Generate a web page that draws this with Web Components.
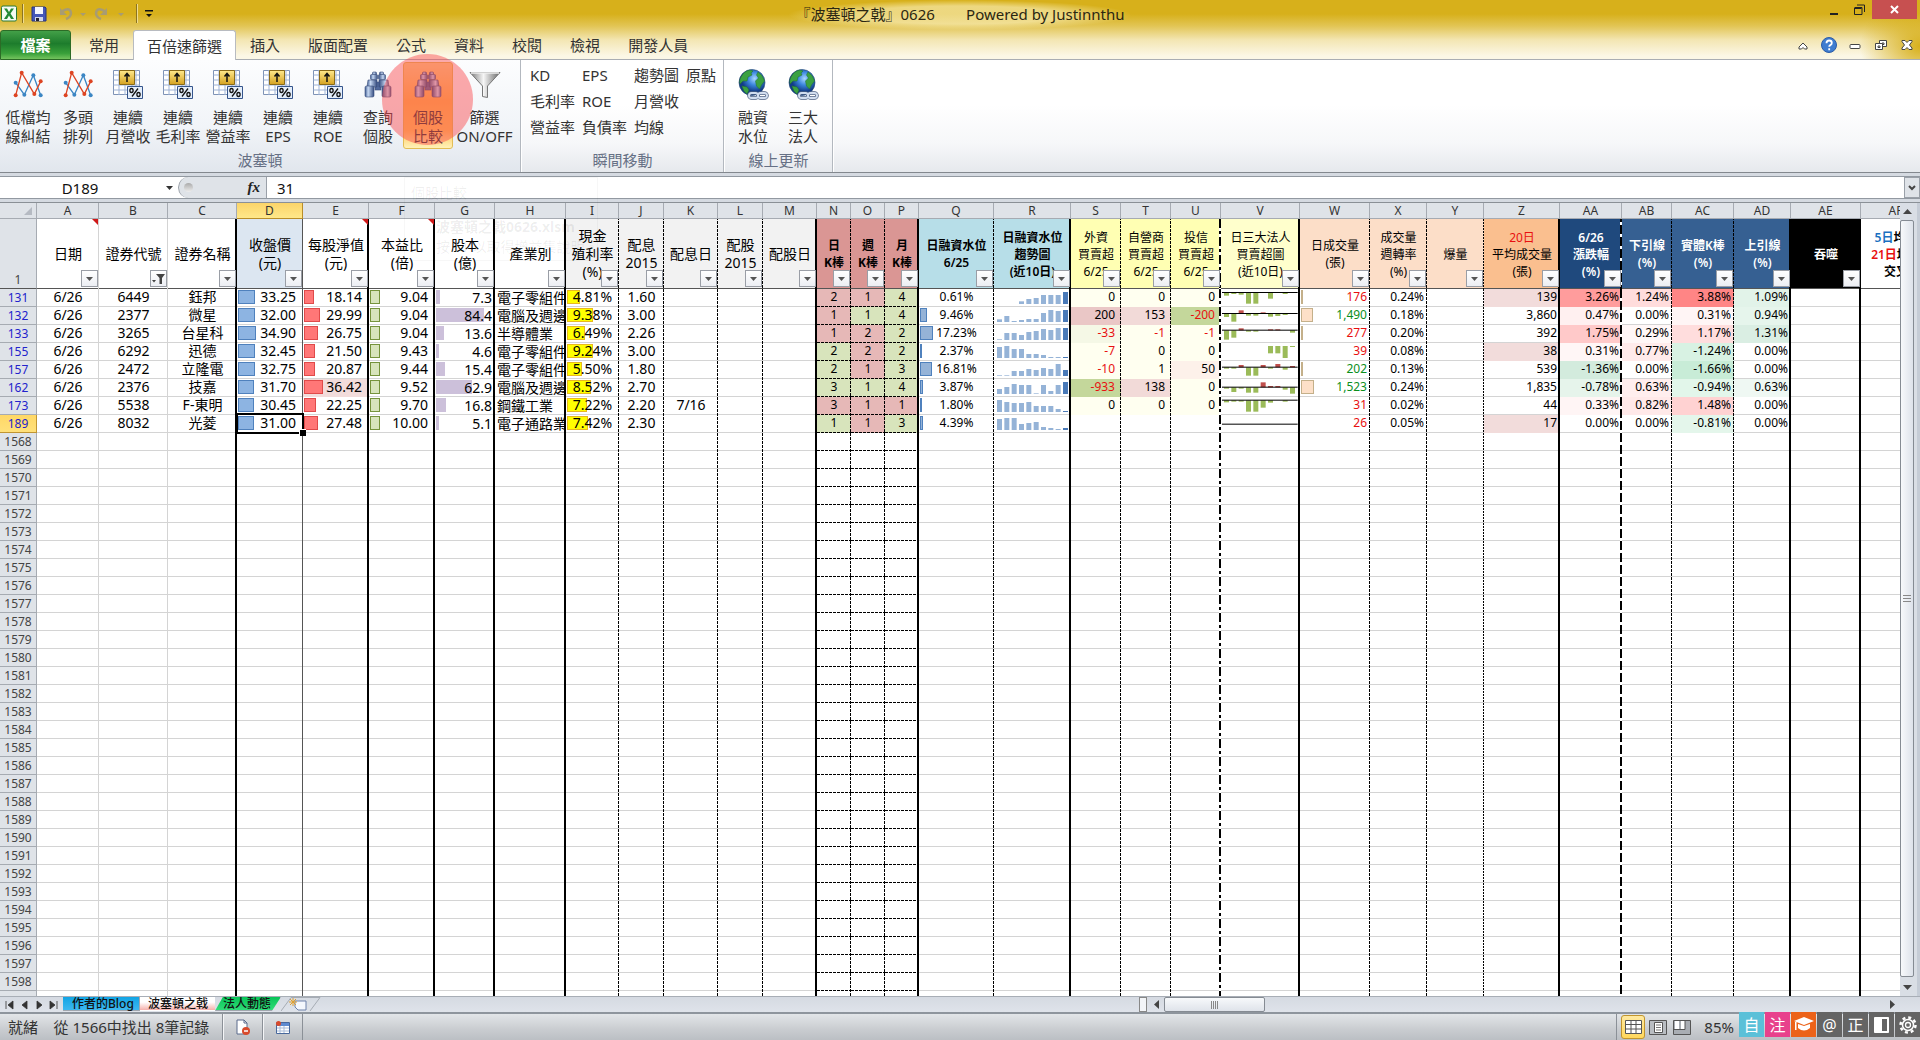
<!DOCTYPE html>
<html lang="zh-Hant">
<head>
<meta charset="utf-8">
<title>『波塞頓之戟』0626</title>
<style>
  body {
    margin: 0;
    font-family: "Noto Sans", "Noto Sans CJK TC", sans-serif;
    font-size: 15px;
    color: #333;
  }
</style>
</head>
<body>
<excel-window></excel-window>

<script>
const ICONS = {
  lines: `<svg width="32" height="32" viewBox="0 0 96 96" fill="none" stroke-width="4">
    <path d="M11 44 L37 80 L64 22 L86 82" stroke="#3b86c4"/><path d="M11 82 L29 14 L67 78 L86 40" stroke="#dd4422"/>
    <g fill="#3b86c4"><circle cx="11" cy="44" r="6"/><circle cx="37" cy="80" r="6"/><circle cx="64" cy="22" r="6"/><circle cx="86" cy="82" r="6"/></g>
    <g fill="#dd4422"><circle cx="11" cy="82" r="6"/><circle cx="29" cy="14" r="6"/><circle cx="67" cy="78" r="6"/><circle cx="86" cy="40" r="6"/></g></svg>`,
  percent: `<svg width="32" height="32" viewBox="0 0 32 32"><defs><linearGradient id="g" x2="0" y2="1"><stop stop-color="#ffe98c"/><stop offset="1" stop-color="#d5a220"/></linearGradient></defs>
    <path d="M1.500 2.500h26v24h-26z" fill="#fff" stroke="#7e93b6"/><path d="M1.500 7h26M1.500 12h26M1.500 17h26M1.500 22h26M7 2v25M13 2v25M20 2v25M24 2v25" stroke="#9fb4d6"/>
    <path d="M7.500 2.500h15v14h-15z" fill="url(#g)" stroke="#8a6a18"/><path d="M15 14V6M12.500 8.500L15 5.500l2.500 3" fill="none" stroke="#111" stroke-width="1.500"/>
    <path d="M15.500 18.500h15v12h-15z" fill="#e4eefb" stroke="#35558c"/><g fill="none" stroke="#111" stroke-width="1.300"><ellipse cx="19.500" cy="22.500" rx="1.600" ry="2"/><ellipse cx="26.500" cy="26.500" rx="1.600" ry="2"/><path d="M26 20.500l-6 8"/></g></svg>`,
  binoculars: `<svg width="32" height="32" viewBox="0 0 32 32"><defs><linearGradient id="b"><stop stop-color="#3d598e"/><stop offset=".35" stop-color="#c7d9f3"/><stop offset="1" stop-color="#344c80"/></linearGradient></defs>
    <g stroke="#3a4f7c" stroke-width=".6"><rect x="13" y="14" width="6" height="8" fill="#50699c"/>
    <g id="half" fill="url(#b)"><rect x="10.500" y="4" width="4" height="3" rx="1"/><rect x="8.500" y="6.500" width="7" height="5" rx="1"/><path d="M6 12h9v7H5z"/><rect x="3" y="18" width="9" height="11" rx="1.500"/></g>
    <use href="#half" x="0" transform="translate(32 0) scale(-1 1)"/></g></svg>`,
  funnel: `<svg width="32" height="32" viewBox="0 0 32 32"><defs><linearGradient id="f"><stop stop-color="#777"/><stop offset=".45" stop-color="#f6f6f6"/><stop offset="1" stop-color="#666"/></linearGradient></defs>
    <path d="M1 4.500h30L18.500 18v11.500l-5-1V18z" fill="url(#f)" stroke="#777"/><path d="M2 5h28" stroke="#eee" stroke-width="1.500"/></svg>`,
  globe: `<svg width="32" height="32" viewBox="0 0 32 32"><defs><radialGradient id="o" cx=".6" cy=".35"><stop stop-color="#a9d8ff"/><stop offset=".5" stop-color="#3b86dd"/><stop offset="1" stop-color="#123c86"/></radialGradient></defs>
    <circle cx="15" cy="14.500" r="13" fill="url(#o)" stroke="#1d4172" stroke-width=".6"/>
    <path d="M4 9q3-6 9-7l3 1-2 2 1 2-4 2-1 4-4 0-3 3q-1-4 1-7zM5 18l5 1 2 3-2 4q-4-3-5-8zM21 4q5 3 6.500 9l-3 4-2 4-3-3-1-5 3-3-2-3z" fill="#3ba142" stroke="#23702a" stroke-width=".5"/>
    <g fill="none" stroke-width="3.500" stroke="#4b5f83"><rect x="12" y="25" width="9" height="5" rx="2.500"/><rect x="21" y="25" width="9" height="5" rx="2.500"/></g>
    <g fill="none" stroke-width="2" stroke="#d2def0"><rect x="12" y="25" width="9" height="5" rx="2.500"/><rect x="21" y="25" width="9" height="5" rx="2.500"/></g></svg>`,
};

const RESET = `
  :host, * { box-sizing: border-box; }
  button { font: inherit; color: inherit; background: none; border: 0; padding: 0; margin: 0; }
  input { font: inherit; color: #111; border: 0; padding: 0; margin: 0; background: none; outline: 0; min-width: 0; }
  svg { display: block; }
`;

class BaseElement extends HTMLElement {
  constructor() {
    super();
    this.attachShadow({ mode: 'open' });
  }

  connectedCallback() {
    this.shadowRoot.innerHTML = `<style>${RESET}${this.styles()}</style>${this.render()}`;
  }
}

class TitleBar extends BaseElement {
  styles() {
    return `
      :host { display: grid; grid-template-columns: 1fr auto 1fr; height: 30px; color: #2b2611; }
      .quick { display: flex; align-items: center; height: 27px; }
      .quick > * { flex: none; }
      .sep { width: 1px; height: 19px; background: #8c7420; box-shadow: 1px 0 #efdc90; margin: 0 8px 0 4px; }
      .name { white-space: pre; line-height: 29px; background: radial-gradient(closest-side, rgba(255,248,210,.55) 60%, transparent); padding: 0 8px; }
      .win { display: flex; justify-content: flex-end; align-items: flex-start; padding-right: 3px; }
      .win button { width: 25px; height: 19px; display: grid; place-items: center; }
      .win .close { width: 45px; background: #c75050; }`;
  }

  render() {
    return `
      <div class="quick">
        <svg width="18" height="18" viewBox="0 0 18 18"><rect x="1.500" y="1" width="15" height="15" rx="1.500" fill="#f5fbf2" stroke="#2c7a35"/><path d="M4 3.500h3l2 3.500 2-3.500h3L10.500 8.500l3.500 5.500h-3L9 10.500 7 14H4l3.500-5.500z" fill="#258a35"/></svg>
        <span class="sep"></span>
        <svg width="16" height="16" viewBox="0 0 16 16"><path d="M1 1h13l1 1v13H1z" fill="#4457b8" stroke="#27357f"/><path d="M4 1h8v7H4z" fill="#f3f6ff"/><path d="M4 11h8v4H4z" fill="#cfd5ea"/><path d="M5 12h3v3H5z" fill="#223"/></svg>
        <svg width="74" height="16" viewBox="0 0 74 16" style="margin-left:11px"><g fill="none" stroke="#a89c72" stroke-width="2.500"><path d="M3 6q9-6 10 1 0 4-5 6"/><path d="M48 6q-9-6-10 1 0 4 5 6"/></g><path d="M2 2v7h7zM49 2v7h-7zM22 7h6l-3 3zM60 7h6l-3 3z" fill="#a89c72"/></svg>
        <span class="sep"></span>
        <svg width="8" height="8" viewBox="0 0 8 8"><path d="M0 0h8v1.500H0zM1 4h6L4 7z" fill="#111"/></svg>
      </div>
      <div class="name">『波塞頓之戟』0626        Powered by Justinnthu</div>
      <div class="win">
        <button aria-label="最小化"><svg width="9" height="12"><path d="M0 10h8" stroke="#222" stroke-width="2"/></svg></button>
        <button aria-label="還原"><svg width="11" height="11" fill="none" stroke="#222"><path d="M1 3.500h7v7H.500v-7M.500 4.500h7M3 1h7.500v7"/></svg></button>
        <button class="close" aria-label="關閉"><svg width="9" height="9"><path d="M1 1l7 7M8 1L1 8" stroke="#fff" stroke-width="2"/></svg></button>
      </div>`;
  }
}
customElements.define('title-bar', TitleBar);

class RibbonTabs extends BaseElement {
  styles() {
    return `
      :host { display: flex; height: 30px; border-bottom: 1px solid #a9adb3; }
      nav { display: flex; flex: 1; height: 30px; }
      button { padding: 0 14px; line-height: 28px; white-space: nowrap; }
      .file { width: 71px; margin-right: 4px; color: #fff; font-weight: bold; line-height: 26px; border: 1px solid #2c6b26; border-radius: 3px 3px 0 0; background: linear-gradient(#43a048, #1d7c2c 45%, #39a03a 80%, #74c35e); }
      .active { background: #fff; border: 1px solid #b8bbc0; border-bottom: 0; padding: 0 13px; border-radius: 3px 3px 0 0; }
      .tools { display: flex; align-items: center; gap: 10px; padding-right: 5px; }
      .tools svg { width: 16px; height: 16px; }`;
  }

  render() {
    const tabs = ['常用', '百倍速篩選', '插入', '版面配置', '公式', '資料', '校閱', '檢視', '開發人員'];
    return `
      <nav><button class="file">檔案</button>${tabs.map((t, i) => `<button class="${i === 1 ? 'active' : ''}">${t}</button>`).join('')}</nav>
      <div class="tools">
        <svg viewBox="0 0 16 16"><path d="M4 10l4-4 4 4v2H9.500L8 10.500 6.500 12H4z" fill="#fff" stroke="#444"/></svg>
        <svg viewBox="0 0 16 16"><circle cx="8" cy="8" r="7.500" fill="#3f7dd0" stroke="#2b5ca8"/><path d="M5.500 6.200q0-2.700 2.700-2.700 2.600 0 2.600 2.400 0 1.400-1.500 2.200-1.100.6-1.100 1.700M8.200 11.200v2" fill="none" stroke="#fff" stroke-width="1.800"/></svg>
        <svg viewBox="0 0 16 16"><rect x="3" y="7.500" width="10" height="4" rx="1" fill="#fff" stroke="#444"/></svg>
        <svg viewBox="0 0 16 16" fill="#fff" stroke="#444"><path d="M6.500 3.500h7v6h-7zM9 6h2v1.500H9z"/><path d="M2.500 6.500h7v6h-7zM5 9h2v1.500H5z"/></svg>
        <svg viewBox="0 0 16 16"><path d="M3 3.500h3l2 2 2-2h3v1L10.500 8l2.500 3v1.500h-3l-2-2-2 2H3V11l2.500-3L3 4.500z" fill="#fff" stroke="#444"/></svg>
      </div>`;
  }
}
customElements.define('ribbon-tabs', RibbonTabs);

class RibbonButton extends BaseElement {
  styles() {
    return `
      :host { display: block; width: 50px; height: 87px; }
      :host([wide]) { width: 63px; }
      button { width: 100%; height: 100%; display: flex; flex-direction: column; align-items: center; gap: 8px; padding-top: 6px; line-height: 19px; white-space: nowrap; }
      :host([hot]) button { border: 1px solid #e3bd55; border-radius: 3px; padding-top: 5px; background: linear-gradient(#fbd58a, #ffb94e 45%, #ffc65c 80%, #fff2b8); }`;
  }

  render() {
    return `<button>${ICONS[this.getAttribute('icon')]}<span><slot></slot></span></button>`;
  }
}
customElements.define('ribbon-button', RibbonButton);

class RibbonGroup extends BaseElement {
  styles() {
    return `
      :host { display: flex; flex-direction: column; border-right: 1px solid #b3b8bf; box-shadow: 1px 0 #fff; margin-right: 1px; }
      .items { display: flex; height: 89px; padding: 2px 4px 0 3px; }
      .label { text-align: center; line-height: 22px; color: #667085; }`;
  }

  render() {
    return `<div class="items"><slot></slot></div><div class="label">${this.getAttribute('label')}</div>`;
  }
}
customElements.define('ribbon-group', RibbonGroup);

class JumpList extends BaseElement {
  styles() {
    return `
      :host { display: grid; grid-template-columns: repeat(4, auto); grid-auto-rows: 26px; column-gap: 7px; padding: 0 3px 0 5px; }
      button { text-align: left; min-width: 30px; white-space: nowrap; line-height: 26px; }`;
  }

  render() {
    const rows = ['KD', 'EPS', '趨勢圖', '原點', '毛利率', 'ROE', '月營收', '', '營益率', '負債率', '均線'];
    return rows.map((r) => (r ? `<button>${r}</button>` : '<span></span>')).join('');
  }
}
customElements.define('jump-list', JumpList);

class RibbonPanel extends BaseElement {
  styles() {
    return `
      :host { display: flex; flex: none; position: relative; height: 113px; background: linear-gradient(#fff 40%, #f6f7f9 75%, #e6e9ed); border-bottom: 1px solid #83888e; }
      .first { background: linear-gradient(#fcfdfe, #f1f4f8 60%, #e1e6ed); }
      /* click marker, sits over the compare button */
      .click { position: absolute; left: 382px; top: -6px; width: 91px; height: 91px; border-radius: 50%; background: rgba(250, 70, 75, .46); pointer-events: none; z-index: 2; }
      .tip { position: absolute; left: 404px; top: 117px; width: 194px; height: 84px; z-index: 3; border: 1px solid rgba(0,0,0,.03); color: rgba(0,0,0,.07); font-size: 14px; padding: 5px 6px; pointer-events: none; white-space: nowrap; }
      .tip div { line-height: 20px; }
      .tip b { display: block; line-height: 20px; margin: 14px 0 0 25px; }
      .tip p { margin: 0 0 0 25px; line-height: 20px; }`;
  }

  render() {
    const growth = ['月營收', '毛利率', '營益率', 'EPS', 'ROE'];
    return `
      <ribbon-group label="波塞頓" class="first">
        <ribbon-button icon="lines">低檔均<br>線糾結</ribbon-button>
        <ribbon-button icon="lines">多頭<br>排列</ribbon-button>
        ${growth.map((g) => `<ribbon-button icon="percent">連續<br>${g}</ribbon-button>`).join('')}
        <ribbon-button icon="binoculars">查詢<br>個股</ribbon-button>
        <ribbon-button icon="binoculars" hot>個股<br>比較</ribbon-button>
        <ribbon-button icon="funnel" wide>篩選<br>ON/OFF</ribbon-button>
      </ribbon-group>
      <ribbon-group label="瞬間移動"><jump-list></jump-list></ribbon-group>
      <ribbon-group label="線上更新">
        <ribbon-button icon="globe">融資<br>水位</ribbon-button>
        <ribbon-button icon="globe">三大<br>法人</ribbon-button>
      </ribbon-group>
      <div class="click"></div>
      <div class="tip"><div>個股比較</div><b>波塞頓之戟0626.xlsm</b><p>按 F1 以取得增益集說明。</p></div>`;
  }
}
customElements.define('ribbon-panel', RibbonPanel);

class FormulaBar extends BaseElement {
  styles() {
    return `
      :host { display: flex; flex: none; height: 30px; padding: 3px 0 3px; background: #d5dae1; border-bottom: 1px solid #8a9096; }
      .row { display: flex; flex: 1; border: 1px solid #9299a1; border-width: 1px 0; background: #fff; }
      .name { width: 160px; text-align: center; }
      .drop { width: 18px; display: grid; place-items: center; }
      .fx { width: 89px; display: flex; align-items: center; justify-content: space-between; padding: 0 6px 0 5px; background: #dfe3e8; border: 1px solid #9aa0a8; border-width: 0 1px; border-radius: 12px 0 0 12px; }
      .dot { width: 9px; height: 9px; border-radius: 50%; background: linear-gradient(#aaa, #eee); }
      .fx i { font: italic bold 15px "Liberation Serif", serif; color: #222; }
      .value { flex: 1; padding-left: 10px; }
      .more { width: 16px; background: #dfe3e8; border: 1px solid #9aa0a8; display: grid; place-items: center; }`;
  }

  render() {
    return `
      <div class="row">
        <input class="name" value="D189" aria-label="名稱方塊">
        <button class="drop" aria-label="名稱清單"><svg width="7" height="4"><path d="M0 0h7L3.500 4z" fill="#333"/></svg></button>
        <div class="fx"><span class="dot"></span><i>fx</i></div>
        <input class="value" value="31" aria-label="資料編輯列">
        <button class="more" aria-label="展開"><svg width="8" height="6"><path d="M1 1l3 3 3-3" fill="none" stroke="#444" stroke-width="2"/></svg></button>
      </div>`;
  }
}
customElements.define('formula-bar', FormulaBar);

// letter, width, right edge, header fill, header text, extra header class
const COLS = [
  ['A', 62, '', '', '日期', 'note'],
  ['B', 69, '', '', '證券代號', 'filtered'],
  ['C', 69, 'thick', '', '證券名稱', ''],
  ['D', 66, 'freeze', '#dce6f1', '收盤價<br>(元)', ''],
  ['E', 66, 'thick', '', '每股淨值<br>(元)', 'note'],
  ['F', 66, 'thick', '', '本益比<br>(倍)', 'note'],
  ['G', 60, 'thick', '', '股本<br>(億)', ''],
  ['H', 71, 'thick', '', '產業別', ''],
  ['I', 53, 'dash', '#f2f2f2', '現金<br>殖利率<br>(%)', ''],
  ['J', 45, 'dash', '#f2f2f2', '配息<br>2015', ''],
  ['K', 54, 'dash', '#f2f2f2', '配息日', ''],
  ['L', 45, 'dash', '#f2f2f2', '配股<br>2015', ''],
  ['M', 54, 'thick', '#f2f2f2', '配股日', ''],
  ['N', 34, 'dash', '#da9694', '日<br>K棒', 'small bold'],
  ['O', 34, 'dash', '#da9694', '週<br>K棒', 'small bold'],
  ['P', 34, 'thick', '#da9694', '月<br>K棒', 'small bold'],
  ['Q', 75, 'dash', '#b7dee8', '日融資水位<br>6/25', 'small semi'],
  ['R', 77, 'thick', '#b7dee8', '日融資水位<br>趨勢圖<br>(近10日)', 'small semi'],
  ['S', 50, 'dash', '#ffffb3', '外資<br>買賣超<br>6/25', 'small'],
  ['T', 50, 'dash', '#ffffb3', '自營商<br>買賣超<br>6/25', 'small'],
  ['U', 50, 'dashdot', '#ffffb3', '投信<br>買賣超<br>6/25', 'small'],
  ['V', 79, 'thick', '#ffffcc', '日三大法人<br>買賣超圖<br>(近10日)', 'small'],
  ['W', 70, 'dash', '#fcdec8', '日成交量<br>(張)', 'small'],
  ['X', 57, 'dash', '#fcdec8', '成交量<br>週轉率<br>(%)', 'small'],
  ['Y', 57, 'dot', '#fcdec8', '爆量', 'small'],
  ['Z', 76, 'thick', '#fabf8f', '<em class="red">20日</em><br>平均成交量<br>(張)', 'small'],
  ['AA', 62, 'mdash', '#1f497d', '6/26<br>漲跌幅<br>(%)', 'small semi light'],
  ['AB', 50, 'dash', '#366092', '下引線<br>(%)', 'small semi light'],
  ['AC', 62, 'dash', '#366092', '實體K棒<br>(%)', 'small semi light'],
  ['AD', 57, 'thick', '#366092', '上引線<br>(%)', 'small semi light'],
  ['AE', 70, 'thick', '#000', '吞噬', 'small semi light'],
  ['AF', 70, '', '', '<em class="blue">5日</em>均線<br><em class="red">21日</em>均線<br>交叉', 'small semi nobutton'],
];

const R = '#e6b8b7', G = '#d8e4bc', Y = '#fffff0';
// [text, bar width, fill, colour]
const ROWS = [
  { n: 131, a: ['6449', '鈺邦'], d: ['33.25', 17], e: ['18.14', 10], f: '9.04', g: ['7.3', 4], h: '電子零組件', i: ['4.81%', 13], j: '1.60',
    k: [[2, R], [1, R], [4, G]], q: ['0.61%', 0], r: [0, 0, 0, 8, 15, 18, 27, 27, 27, 36], s: [['0', Y], ['0', Y], ['0', Y]],
    v: [11, -9, -4, -6, -33, -33, 0, -18, 0, -4, 0], w: ['176', 1, 'red'], x: '0.24%', z: ['139', '#f2dcdb'],
    p: [['3.26%', '#ff9c9c'], ['1.24%', '#ffdcdc'], ['3.88%', '#ff8585'], ['1.09%', '#e2f3e9']] },
  { n: 132, a: ['2377', '微星'], d: ['32.00', 17], e: ['29.99', 16], f: '9.04', g: ['84.4', 48], h: '電腦及週邊', i: ['9.38%', 26], j: '3.00',
    k: [[1, R], [1, G], [4, G]], q: ['9.46%', 7], r: [8, 18, 3, 6, 9, 9, 27, 36, 33, 36], s: [['200', '#eac7c6'], ['153', '#f2dad8'], ['-200', '#c4d79b']],
    v: [20, -10, -24, 10, -6, -6, 4, -9, -7, -4, 0], w: ['1,490', 12, 'green'], x: '0.18%', z: ['3,860', ''],
    p: [['0.47%', '#fff0f0'], ['0.00%', ''], ['0.31%', '#fff5f5'], ['0.94%', '#e6f5ec']] },
  { n: 133, a: ['3265', '台星科'], d: ['34.90', 18], e: ['26.75', 14], f: '9.04', g: ['13.6', 8], h: '半導體業', i: ['6.49%', 18], j: '2.26',
    k: [[1, R], [2, R], [2, G]], q: ['17.23%', 13], r: [2, 21, 21, 15, 24, 27, 33, 30, 36, 36], s: [['-33', '#f5f8e6'], ['-1', Y], ['-1', Y]],
    v: [16, -28, -22, 6, -4, -4, 0, 3, 3, 0, -7], w: ['277', 2, 'red'], x: '0.20%', z: ['392', ''],
    p: [['1.75%', '#ffc9c9'], ['0.29%', '#fff7f7'], ['1.17%', '#ffdddd'], ['1.31%', '#daeee3']] },
  { n: 155, a: ['6292', '迅德'], d: ['32.45', 17], e: ['21.50', 11], f: '9.43', g: ['4.6', 3], h: '電子零組件', i: ['9.24%', 26], j: '3.00',
    k: [[2, G], [2, R], [2, G]], q: ['2.37%', 2], r: [33, 36, 27, 27, 12, 12, 9, 3, 3, 3], s: [['-7', Y], ['0', Y], ['0', Y]],
    v: [9, 0, 0, 0, 0, 0, 0, -22, -22, -36, -3], noAxis: true, w: ['39', 0, 'red'], x: '0.08%', z: ['38', '#f2dcdb'],
    p: [['0.31%', '#fff6f6'], ['0.77%', '#ffebeb'], ['-1.24%', '#d8f2e3'], ['0.00%', '']] },
  { n: 157, a: ['2472', '立隆電'], d: ['32.75', 17], e: ['20.87', 11], f: '9.44', g: ['15.4', 9], h: '電子零組件', i: ['5.50%', 15], j: '1.80',
    k: [[2, G], [1, R], [3, G]], q: ['16.81%', 12], r: [2, 2, 15, 15, 21, 18, 24, 21, 36, 18], s: [['-10', Y], ['1', Y], ['50', '#fdf1ea']],
    v: [19, -4, -4, 7, -25, -25, 7, -4, 10, -7, 4], w: ['202', 2, 'green'], x: '0.13%', z: ['539', ''],
    p: [['-1.36%', '#d3ebdd'], ['0.00%', ''], ['-1.66%', '#c8ecd7'], ['0.00%', '']] },
  { n: 162, a: ['2376', '技嘉'], d: ['31.70', 16], e: ['36.42', 19, '#f2dcdb'], f: '9.52', g: ['62.9', 36], h: '電腦及週邊', i: ['8.52%', 24], j: '2.70',
    k: [[3, G], [1, G], [4, G]], q: ['3.87%', 3], r: [15, 21, 30, 27, 27, 2, 27, 9, 27, 36], s: [['-933', '#c4d79b'], ['138', '#f2dad8'], ['0', Y]],
    v: [25, -4, -14, -4, -16, -16, 15, 4, 4, -7, -19], w: ['1,523', 13, 'green'], x: '0.24%', z: ['1,835', ''],
    p: [['-0.78%', '#e6f4eb'], ['0.63%', '#ffeeee'], ['-0.94%', '#e2f6ea'], ['0.63%', '#eff8f3']] },
  { n: 173, a: ['5538', 'F-東明'], d: ['30.45', 16], e: ['22.25', 12], f: '9.70', g: ['16.8', 10], h: '鋼鐵工業', i: ['7.22%', 20], j: '2.20', day: '7/16',
    k: [[3, R], [1, R], [1, R]], q: ['1.80%', 1], r: [36, 30, 27, 27, 30, 18, 18, 18, 9, 3], s: [['0', Y], ['0', Y], ['0', Y]],
    v: [10, -6, -4, -4, -34, -34, -22, -7, 0, -4, 0], w: ['31', 0, 'red'], x: '0.02%', z: ['44', ''],
    p: [['0.33%', '#fff5f5'], ['0.82%', '#ffe9e9'], ['1.48%', '#ffd2d2'], ['0.00%', '']] },
  { n: 189, a: ['8032', '光菱'], d: ['31.00', 16], e: ['27.48', 14], f: '10.00', g: ['5.1', 3], h: '電子通路業', i: ['7.42%', 21], j: '2.30',
    k: [[1, G], [1, R], [3, G]], q: ['4.39%', 3], r: [33, 36, 36, 18, 21, 24, 9, 6, 3, 6], s: [['', ''], ['', ''], ['', '']],
    v: [28, 0, 0, 0, 0, 0, 0, 0, 0, 0, 0], w: ['26', 0, 'red'], x: '0.05%', z: ['17', '#f2dcdb'],
    p: [['0.00%', ''], ['0.00%', ''], ['-0.81%', '#e4f6eb'], ['0.00%', '']] },
];

class SheetGrid extends BaseElement {
  styles() {
    return `
      :host { display: flex; flex: 1; min-height: 0; overflow: hidden; background: #fff; }
      .view { flex: 1; min-width: 0; overflow: hidden; }
      table { table-layout: fixed; width: 0; border-collapse: separate; border-spacing: 0; color: #000; }
      th, td { padding: 0; position: relative; font-weight: normal; height: 18px; line-height: 16px; font-size: 14px; white-space: nowrap; text-align: center; vertical-align: top; }
      em { font-style: normal; }
      .letters th { height: 16px; font-size: 12px; line-height: 15px; color: #333; background: #dfe3e8; border-right: 1px solid #a6abb2; border-bottom: 1px solid #a6abb2; overflow: hidden; }
      .letters th.sel { background: linear-gradient(#fbd469, #ffe88a); border-color: #b98e28; }
      .corner svg { position: absolute; right: 4px; bottom: 3px; }
      tbody th { font-size: 12px; line-height: 17px; color: #444; background: #dfe3e8; border-right: 1px solid #a6abb2; border-bottom: 1px solid #a6abb2; }
      tbody th.hit { color: #2222cc; }
      tbody th.sel { background: linear-gradient(#ffd866, #ffe07a); border-color: #c09532; }
      .head th { height: 70px; vertical-align: bottom; border-bottom: 1px solid #555; }

      td {
        --right: linear-gradient(#d4d4d4, #d4d4d4);
        --w: 1px;
        --bottom: linear-gradient(#d4d4d4, #d4d4d4);
        background: var(--right) right / var(--w) 100% no-repeat, var(--bottom) bottom / 100% 1px no-repeat, var(--fill, transparent);
      }
      td.thick { --right: linear-gradient(#000, #000); --w: 2px; }
      td.freeze { --right: linear-gradient(#555, #555); }
      /* dash periods divide two rows, so odd rows start half way */
      td.dash { --right: repeating-linear-gradient(#000 0 3px, transparent 3px 4px); }
      tr:nth-child(odd) td.dash { --right: repeating-linear-gradient(#000 -2px 1px, transparent 1px 2px); }
      td.dot { --right: repeating-linear-gradient(#000 0 2px, transparent 2px 3px); }
      td.mdash { --right: repeating-linear-gradient(#000 0 9px, #fff 9px 12px); --w: 2px; }
      tr:nth-child(odd) td.mdash { --right: repeating-linear-gradient(#000 -6px 3px, #fff 3px 6px); }
      td.dashdot { --right: repeating-linear-gradient(#000 0 9px, #fff 9px 12px, #000 12px 15px, #fff 15px 18px); --w: 2px; }
      td.filled { --bottom: linear-gradient(transparent, transparent); }
      td.stick { --bottom: repeating-linear-gradient(90deg, #000 0 3px, transparent 3px 4px); font-size: 12px; }
      td.last { --w: 0px; }

      .head td { height: 70px; line-height: 18px; vertical-align: middle; --bottom: linear-gradient(#555, #555); }
      .head td.small { font-size: 12px; line-height: 17px; }
      .head td.bold { font-weight: bold; }
      .head td.semi { font-weight: 600; }
      .head td.light { color: #fff; }
      .red { color: #e81010; }
      .blue { color: #1a70c0; }
      .green { color: #0a8f1c; }
      .head .note::before { content: ""; position: absolute; right: 1px; top: 0; border: 3px solid; border-color: #d01818 #d01818 transparent transparent; }
      .head button { position: absolute; right: 1px; bottom: 2px; width: 17px; height: 17px; border: 1px solid #9a9ea6; background: linear-gradient(#fff, #eceef3); display: grid; place-items: center; }

      td.right { text-align: right; padding-right: 7px; }
      td.near { text-align: right; padding-right: 3px; }
      td.low { line-height: 18px; }
      td.left { text-align: left; padding-left: 2px; }
      td.left span { display: block; overflow: hidden; width: 67px; }
      td.num { font-size: 12px; }
      td.flow { text-align: right; padding-right: 6px; font-size: 12px; }
      td span { position: relative; }
      .bar { position: absolute; left: 1px; top: 1px; height: 14px; border: 1px solid var(--line); background: var(--tint); }
      .cursor::after { content: ""; position: absolute; inset: -2px -1px -1px -1px; border: 2px solid #000; }
      .cursor::before { content: ""; position: absolute; right: -3px; bottom: -3px; width: 6px; height: 6px; background: #000; border: solid #fff; border-width: 1px 0 0 1px; z-index: 2; }

      .scroll { width: 20px; display: flex; flex-direction: column; align-items: stretch; background: #d9dee5; padding-right: 3px; border-right: 3px solid #c5ccd6; }
      .scroll button { height: 17px; display: grid; place-items: center; }
      .thumb { flex: 1; border: 1px solid #858b93; border-radius: 2px; background: linear-gradient(90deg, #f7f9fb, #dde2ea); display: grid; place-items: center; }
      .space { height: 2px; }`;
  }

  bar(width, line, tint) {
    return width ? `<i class="bar" style="width:${width}px;--line:${line};--tint:${tint}"></i>` : '';
  }

  trend(values) {
    const bars = values.map((v, i) => `<rect x="${9 + i * 22}" y="${45 - v}" width="15" height="${v}" fill="${i === 9 ? '#4a7ab8' : '#95b3d7'}"/>`);
    return `<svg width="76" height="18" viewBox="0 0 228 54">${bars.join('')}</svg>`;
  }

  flow([axis, ...values], noAxis) {
    const bars = values.map((v, i) => `<rect x="${9 + i * 22}" y="${v < 0 ? axis : axis - v}" width="15" height="${Math.abs(v)}" fill="${v < 0 ? '#9bbb59' : '#c0504d'}"/>`);
    const line = noAxis ? '' : `<rect x="3" y="${axis - 2}" width="227" height="3"/>`;
    return `<svg width="77" height="18" viewBox="0 0 231 54">${bars.join('')}${line}</svg>`;
  }

  cell(col, cls, html, fill) {
    const c = COLS[col];
    const last = col === COLS.length - 1 ? 'last' : '';
    return `<td class="${c[2]} ${cls} ${fill && cls !== 'stick' ? 'filled' : ''} ${last}"${fill ? ` style="--fill:${fill}"` : ''}>${html}</td>`;
  }

  dataRow(r) {
    const out = [
      ['', '6/26'], ['', r.a[0]], ['', r.a[1]],
      [r.n === 189 ? 'right cursor' : 'right', this.bar(r.d[1], '#4f81bd', '#8db4e2') + `<span>${r.d[0]}</span>`],
      ['right', this.bar(r.e[1], '#e04a4a', '#ff7777') + `<span>${r.e[0]}</span>`, r.e[2]],
      ['right', this.bar(10, '#76933c', '#d8e4bc') + `<span>${r.f}</span>`],
      ['near low', this.bar(r.g[1], '#ccc0da', '#ccc0da') + `<span>${r.g[0]}</span>`],
      ['left low', `<span>${r.h}</span>`],
      ['', this.bar(r.i[1], '#e8b820', '#ffff00') + `<span>${r.i[0]}</span>`],
      ['', r.j], ['', r.day || ''], ['', ''], ['', ''],
      ...r.k.map(([t, f]) => ['stick', t, f]),
      ['num', this.bar(r.q[1], '#4f81bd', '#95b3d7') + `<span>${r.q[0]}</span>`],
      ['', this.trend(r.r)],
      ...r.s.map(([t, f]) => ['flow', t < 0 ? `<em class="red">${t}</em>` : t, f]),
      ['', this.flow(r.v, r.noAxis)],
      ['num near', this.bar(r.w[1], '#c4b08a', '#fde0c8') + `<span class="${r.w[2]}">${r.w[0]}</span>`],
      ['num near', r.x], ['', ''], ['num near', r.z[0], r.z[1]],
      ...r.p.map(([t, f]) => ['num near', t, f]),
      ['', ''], ['', ''],
    ];
    return `<tr><th scope="row" class="hit ${r.n === 189 ? 'sel' : ''}">${r.n}</th>${out.map((o, i) => this.cell(i, ...o)).join('')}</tr>`;
  }

  emptyRow(n) {
    return `<tr><th scope="row">${n}</th>${COLS.map((c, i) => this.cell(i, 'NOP'.includes(c[0]) ? 'stick' : '', '')).join('')}</tr>`;
  }

  header() {
    const arrow = '<svg width="7" height="4"><path d="M0 0h7L3.500 4z" fill="#555"/></svg>';
    const funnel = '<svg width="13" height="12"><path d="M4 1h9L10 5v6H7.500V5zM0 7h4L2 9.500z" fill="#444"/></svg>';
    return COLS.map((c, i) => {
      const button = c[5].includes('nobutton') ? '' : `<button aria-label="篩選 ${c[0]}">${c[5] === 'filtered' ? funnel : arrow}</button>`;
      return this.cell(i, c[5], c[4] + button, c[3]).replace(' filled', '');
    }).join('');
  }

  render() {
    const empties = Array.from({ length: 31 }, (_, i) => this.emptyRow(1568 + i)).join('');
    return `
      <div class="view"><table>
        <colgroup><col style="width:37px">${COLS.map((c) => `<col style="width:${c[1]}px">`).join('')}</colgroup>
        <thead><tr class="letters"><th class="corner"><svg width="8" height="8"><path d="M8 0v8H0z" fill="#b5bac2"/></svg></th>${COLS.map((c) => `<th scope="col" class="${c[0] === 'D' ? 'sel' : ''}">${c[0]}</th>`).join('')}</tr></thead>
        <tbody><tr class="head"><th scope="row">1</th>${this.header()}</tr>${ROWS.map((r) => this.dataRow(r)).join('')}${empties}${this.emptyRow('')}</tbody>
      </table></div>
      <div class="scroll">
        <button aria-label="向上"><svg width="9" height="5"><path d="M0 5h9L4.500 0z" fill="#444"/></svg></button>
        <div class="thumb"><svg width="8" height="8"><path d="M0 .500h8M0 3.500h8M0 6.500h8" stroke="#888"/></svg></div>
        <div class="space"></div>
        <button aria-label="向下"><svg width="9" height="5"><path d="M0 0h9L4.500 5z" fill="#444"/></svg></button>
      </div>`;
  }
}
customElements.define('sheet-grid', SheetGrid);

class SheetTabs extends BaseElement {
  styles() {
    return `
      :host { display: flex; flex: none; height: 18px; background: linear-gradient(#d5dae2, #dfe3ea); border-top: 1px solid #a8aeb6; border-bottom: 2px solid #8e959d; font-size: 12px; }
      .nav { width: 63px; display: flex; align-items: center; justify-content: space-around; padding: 0 3px; }
      .nav button { width: 12px; display: grid; place-items: center; }
      .tab { height: 14px; line-height: 14px; font-weight: 500; color: #111; padding: 0 9px; white-space: nowrap; border: 1px solid #a0a6ae; border-top: 0; border-left: 0; }
      .blue { background: linear-gradient(#12a4e4, #3db8f0); padding: 0 5px 0 9px; }
      .red { background: linear-gradient(#fff 40%, #f5b0ac); border-color: transparent; padding: 0 6px 0 8px; }
      .green { background: linear-gradient(#08c458, #30dc78); padding: 0 9px 0 8px; clip-path: polygon(8px 0, 100% 0, calc(100% - 9px) 100%, 0 100%); }
      .new { width: 40px; display: grid; place-items: center; }
      .gap { flex: 1; }
      .hbar { width: 781px; display: flex; align-items: stretch; padding-right: 20px; }
      .hbar button { width: 16px; display: grid; place-items: center; }
      .split { width: 8px; border: 1px solid #888; background: #f3f5f8; margin-right: 1px; }
      .thumb { width: 101px; border: 1px solid #858b93; border-radius: 2px; background: linear-gradient(#f7f9fb, #dfe3ea); display: grid; place-items: center; }`;
  }

  render() {
    const nav = ['M1 1v8M8 1L3 5l5 4z', 'M8 1L3 5l5 4z', 'M3 1l5 4-5 4z', 'M9 1v8M2 1l5 4-5 4z'];
    return `
      <div class="nav">${nav.map((d, i) => `<button aria-label="捲動 ${i + 1}"><svg width="10" height="10"><path d="${d}" fill="#333" stroke="#333" stroke-width=".8"/></svg></button>`).join('')}</div>
      <button class="tab blue">作者的Blog</button>
      <button class="tab red">波塞頓之戟</button>
      <button class="tab green">法人動態</button>
      <button class="new" aria-label="插入工作表"><svg width="40" height="15" viewBox="0 0 40 15"><path d="M0 14L10 .500h29L29 14" fill="none" stroke="#a6acb4"/><path d="M14 4h11v9H17l-3-3z" fill="#f4f7fd" stroke="#6f82ab"/><path d="M12 1v8M8 5h8M9 2l6 6M15 2L9 8" stroke="#e0a030"/></svg></button>
      <span class="gap"></span>
      <div class="hbar">
        <span class="split"></span>
        <button aria-label="向左"><svg width="5" height="9"><path d="M5 0v9L0 4.500z" fill="#444"/></svg></button>
        <div class="thumb"><svg width="8" height="8"><path d="M.500 0v8M2.500 0v8M4.500 0v8M6.500 0v8" stroke="#888"/></svg></div>
        <span class="gap"></span>
        <button aria-label="向右"><svg width="5" height="9"><path d="M0 0v9l5-4.500z" fill="#444"/></svg></button>
      </div>`;
  }
}
customElements.define('sheet-tabs', SheetTabs);

class StatusBar extends BaseElement {
  styles() {
    return `
      :host { display: flex; flex: none; position: relative; height: 26px; align-items: center; background: linear-gradient(#e2e5e8, #c9ccd0 60%, #bbbfc4); color: #333; }
      .msg { padding-left: 8px; white-space: pre; line-height: 22px; width: 222px; }
      .cell { width: 40px; height: 26px; border-left: 1px solid #8b9097; box-shadow: inset 1px 0 #f4f5f7; display: grid; place-items: center; }
      .end { width: 0; }
      .gap { flex: 1; }
      .views { display: flex; gap: 2px; padding-left: 4px; border-left: 1px solid #8b9097; height: 26px; align-items: center; }
      .views button { width: 22px; height: 24px; display: grid; place-items: center; }
      .views .on { width: 24px; border: 1px solid #c2952c; border-radius: 3px; background: linear-gradient(#ffe9a0, #ffd75c); }
      .zoom { padding: 0 5px 0 11px; line-height: 22px; }
      .ime { display: flex; gap: 1px; align-self: flex-start; margin-top: -2px; z-index: 2; }
      .ime button { width: 25px; height: 25px; color: #fff; background: #646464; display: grid; place-items: center; font-size: 16px; line-height: 24px; }
      .ime .c0 { background: #5bc0d8; }
      .ime .c1 { background: #e8418c; }
      .ime .c2 { background: #ec6218; }`;
  }

  render() {
    const ime = ['自', '注',
      '<svg width="20" height="16"><path d="M0 4l10-4 10 4-10 4zM4 7l6 2 6-2v4q-6 5-12 0zM1 5h1.500v8H1z" fill="#fff"/></svg>',
      '@', '正',
      '<svg width="15" height="16"><path d="M.500.500h14v15H.500z" fill="#fff" stroke="#fff"/><path d="M8 2h5v12H8z" fill="#646464"/></svg>',
      '<svg width="18" height="18" fill="none" stroke="#fff"><circle cx="9" cy="9" r="7.500" stroke-width="2.500" stroke-dasharray="3 2.890"/><circle cx="9" cy="9" r="5.500" stroke-width="1.500"/><circle cx="9" cy="9" r="2.500" stroke-width="1.300"/></svg>'];
    return `
      <div class="msg">就緒    從 1566中找出 8筆記錄</div>
      <div class="cell"><svg width="16" height="17"><path d="M2 1h7l3 3v11H2z" fill="#fff" stroke="#5a6b8c"/><path d="M9 1v3h3" fill="none" stroke="#5a6b8c"/><circle cx="11" cy="12" r="4" fill="#d84a2c"/><path d="M9 12h4" stroke="#fff" stroke-width="1.500"/></svg></div>
      <div class="cell"><svg width="16" height="15"><path d="M1.500 2.500h13v11h-13z" fill="#fff" stroke="#48689c"/><path d="M2 3h12v3H2z" fill="#5f8bd0"/><path d="M2 8h12M2 11h12M5 6v7M9 6v7" stroke="#a8bbd8"/><circle cx="3.500" cy="3.500" r="2.500" fill="#d84a2c"/></svg></div>
      <div class="cell end"></div>
      <span class="gap"></span>
      <div class="views">
        <button class="on" aria-label="標準模式"><svg width="17" height="14"><path d="M.500.500h16v13H.500z" fill="#fff" stroke="#555"/><path d="M1 4.500h15M1 9h15M6 1v12M11 1v12" stroke="#555"/></svg></button>
        <button aria-label="整頁模式"><svg width="18" height="15"><path d="M.500.500h17v14H.500z" fill="#b9bdc2" stroke="#555"/><path d="M5.500 2.500h8v10h-8z" fill="#fff" stroke="#555"/><path d="M7 5h5M7 7.500h5M7 10h5" stroke="#777"/></svg></button>
        <button aria-label="分頁預覽"><svg width="18" height="15"><path d="M.500.500h17v14H.500z" fill="#a9adb3" stroke="#555"/><path d="M2 1h4v8H2zM8 1h4v8H8z" fill="#fff"/><path d="M.500 9.500h11.500v-9" fill="none" stroke="#555"/></svg></button>
      </div>
      <span class="zoom">85%</span>
      <div class="ime">${ime.map((g, i) => `<button class="c${i}">${g}</button>`).join('')}</div>`;
  }
}
customElements.define('status-bar', StatusBar);

class ExcelWindow extends BaseElement {
  styles() {
    return `
      :host { display: flex; flex-direction: column; height: 100vh; overflow: hidden; }
      header {
        flex: none;
        background:
          radial-gradient(ellipse 60px 50px at right 46px, #d7b01c, rgba(215,176,28,0) 100%),
          linear-gradient(#d7b01b 14px, #e2c555 26px, #f3e6b3 40px, #fbf7e6 56px);
      }`;
  }

  render() {
    return `
      <header><title-bar></title-bar><ribbon-tabs></ribbon-tabs></header>
      <ribbon-panel></ribbon-panel>
      <formula-bar></formula-bar>
      <sheet-grid></sheet-grid>
      <sheet-tabs></sheet-tabs>
      <status-bar></status-bar>`;
  }
}
customElements.define('excel-window', ExcelWindow);
</script>
</body>
</html>
